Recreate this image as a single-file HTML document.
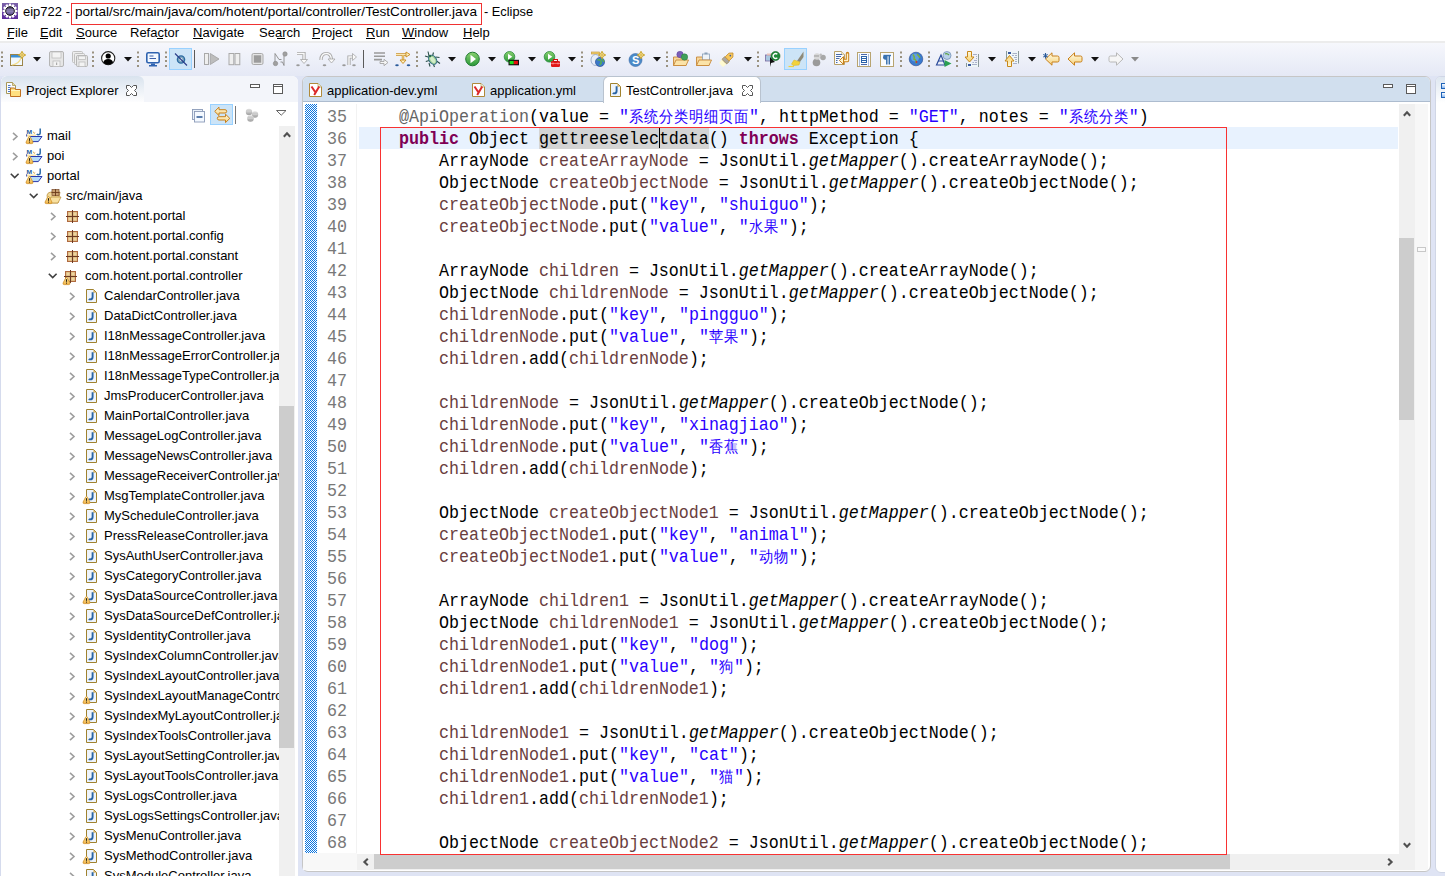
<!DOCTYPE html><html><head><meta charset="utf-8"><style>
*{box-sizing:border-box}
html,body{margin:0;padding:0}
body{width:1445px;height:876px;position:relative;overflow:hidden;background:#fff;font-family:"Liberation Sans",sans-serif;color:#000}
.a{position:absolute}
.t{position:absolute;white-space:pre;font-size:13px;line-height:16px}
svg{position:absolute;overflow:visible}
#code .l{position:absolute;left:0;height:22px;white-space:pre;font-family:"Liberation Mono",monospace;font-size:16.67px;line-height:22px;transform:scaleY(1.12);transform-origin:0 15.4px}
.k{color:#7f0055;font-weight:bold}
.an{color:#646464}
.s{color:#2a00ff}
.v{color:#6a3e3e}
.i{font-style:italic}
.ln{position:absolute;width:30px;text-align:right;font-family:"Liberation Mono",monospace;font-size:16.67px;line-height:22px;color:#787878;transform:scaleY(1.12);transform-origin:0 15.4px}
.cj{display:inline-block;width:15px;font-size:14px;text-align:center;vertical-align:top}
.row .t{color:#000}
</style></head><body>
<div class="a" style="left:0;top:0;width:1445px;height:41px;background:#fff"></div>
<svg style="left:2px;top:3px" width="16" height="16" viewBox="0 0 16 16">
<defs><linearGradient id="eg" x1="0" y1="0" x2="0" y2="1"><stop offset="0" stop-color="#7a62a8"/><stop offset="1" stop-color="#5a2a9c"/></linearGradient>
<linearGradient id="ec" x1="0" y1="0" x2="0" y2="1"><stop offset="0" stop-color="#3a3258"/><stop offset="0.5" stop-color="#8a80b0"/><stop offset="1" stop-color="#4a3a80"/></linearGradient></defs>
<rect x="0" y="0" width="16" height="16" fill="url(#eg)"/>
<g fill="#fff"><rect x="6.9" y="0.6" width="2.2" height="3" transform="rotate(0 8 8)"/><rect x="6.9" y="0.6" width="2.2" height="3" transform="rotate(30 8 8)"/><rect x="6.9" y="0.6" width="2.2" height="3" transform="rotate(60 8 8)"/><rect x="6.9" y="0.6" width="2.2" height="3" transform="rotate(90 8 8)"/><rect x="6.9" y="0.6" width="2.2" height="3" transform="rotate(120 8 8)"/><rect x="6.9" y="0.6" width="2.2" height="3" transform="rotate(150 8 8)"/><rect x="6.9" y="0.6" width="2.2" height="3" transform="rotate(180 8 8)"/><rect x="6.9" y="0.6" width="2.2" height="3" transform="rotate(210 8 8)"/><rect x="6.9" y="0.6" width="2.2" height="3" transform="rotate(240 8 8)"/><rect x="6.9" y="0.6" width="2.2" height="3" transform="rotate(270 8 8)"/><rect x="6.9" y="0.6" width="2.2" height="3" transform="rotate(300 8 8)"/><rect x="6.9" y="0.6" width="2.2" height="3" transform="rotate(330 8 8)"/><circle cx="8" cy="8" r="5.8"/></g>
<circle cx="8" cy="8" r="4.3" fill="url(#ec)" stroke="#111" stroke-width="1"/>
<path d="M4.5 6.5h7M4 8.3h8M4.5 10h7" stroke="#a89ac8" stroke-width="0.5" opacity="0.7"/>
</svg>
<div class="t" style="left:23px;top:4px;font-size:13px">eip722 -</div>
<div class="a" style="left:71px;top:3px;width:411px;height:22px;border:1px solid #f03232"></div>
<div class="t" style="left:75px;top:4px;font-size:13.6px">portal/src/main/java/com/hotent/portal/controller/TestController.java</div>
<div class="t" style="left:484px;top:4px;font-size:12.8px">- Eclipse</div>
<div class="t" style="left:7px;top:25px;font-size:13px">File</div>
<div class="t" style="left:40px;top:25px;font-size:13px">Edit</div>
<div class="t" style="left:76px;top:25px;font-size:13px">Source</div>
<div class="t" style="left:130px;top:25px;font-size:13px">Refactor</div>
<div class="t" style="left:193px;top:25px;font-size:13px">Navigate</div>
<div class="t" style="left:259px;top:25px;font-size:13px">Search</div>
<div class="t" style="left:312px;top:25px;font-size:13px">Project</div>
<div class="t" style="left:366px;top:25px;font-size:13px">Run</div>
<div class="t" style="left:402px;top:25px;font-size:13px">Window</div>
<div class="t" style="left:463px;top:25px;font-size:13px">Help</div>
<div class="a" style="left:7px;top:38px;width:7px;height:1px;background:#000"></div>
<div class="a" style="left:40px;top:38px;width:8px;height:1px;background:#000"></div>
<div class="a" style="left:76px;top:38px;width:9px;height:1px;background:#000"></div>
<div class="a" style="left:157px;top:38px;width:6px;height:1px;background:#000"></div>
<div class="a" style="left:193px;top:38px;width:10px;height:1px;background:#000"></div>
<div class="a" style="left:277px;top:38px;width:8px;height:1px;background:#000"></div>
<div class="a" style="left:312px;top:38px;width:8px;height:1px;background:#000"></div>
<div class="a" style="left:366px;top:38px;width:9px;height:1px;background:#000"></div>
<div class="a" style="left:402px;top:38px;width:13px;height:1px;background:#000"></div>
<div class="a" style="left:463px;top:38px;width:9px;height:1px;background:#000"></div>
<div class="a" style="left:0;top:41px;width:1445px;height:2px;background:#ececec"></div>
<div class="a" style="left:0;top:43px;width:1445px;height:34px;background:linear-gradient(#f6f7fc,#e4e8f5)"></div>
<svg style="left:1px;top:51px" width="3" height="17"><rect x="0" y="0.5" width="2" height="2" fill="#9a9280"/><rect x="0" y="5" width="2" height="2" fill="#9a9280"/><rect x="0" y="9" width="2" height="2" fill="#9a9280"/><rect x="0" y="14" width="2" height="2" fill="#9a9280"/></svg>
<svg style="left:10px;top:51px" width="16" height="16" viewBox="0 0 16 16"><rect x="0.5" y="3.5" width="12" height="11" fill="#f2f8fd" stroke="#9b8448"/><rect x="1" y="4" width="11" height="2.5" fill="#3d8fd4"/><path d="M2 14 Q9 13 11 7" stroke="#f3dc8a" fill="none" stroke-width="1.2"/><path d="M12 0.3 L13.3 2.7 L15.7 4 L13.3 5.3 L12 7.7 L10.7 5.3 L8.3 4 L10.7 2.7Z" fill="#fffbe8" stroke="#c8a020" stroke-width="1" stroke-linejoin="round"/><path d="M12 1.8v4.4M9.8 4h4.4" stroke="#d8b030" stroke-width="1"/></svg>
<svg style="left:33px;top:57px" width="8" height="5"><path d="M0 0H8L4 4.5Z" fill="#111"/></svg>
<svg style="left:49px;top:51px" width="16" height="16" viewBox="0 0 16 16"><rect x="0.5" y="0.5" width="14" height="15" rx="1.5" fill="#e6e6e6" stroke="#b5b5b5"/><rect x="3" y="1" width="9" height="6" fill="#f3f3f3" stroke="#bdbdbd" stroke-width="0.8"/><rect x="4" y="10" width="7" height="5.5" fill="#f3f3f3" stroke="#bdbdbd" stroke-width="0.8"/><rect x="7" y="11.5" width="1.2" height="2.5" fill="#aaa"/></svg>
<svg style="left:72px;top:51px" width="16" height="16" viewBox="0 0 16 16"><rect x="0.5" y="0.5" width="10" height="11" rx="1" fill="#eee" stroke="#c0c0c0"/><rect x="2.5" y="2.5" width="10" height="11" rx="1" fill="#eee" stroke="#c0c0c0"/><rect x="4.5" y="4.5" width="11" height="11" rx="1.2" fill="#e6e6e6" stroke="#b5b5b5"/><rect x="7" y="11" width="6" height="4.5" fill="#f3f3f3" stroke="#bdbdbd" stroke-width="0.8"/><rect x="6.5" y="5" width="7" height="3.5" fill="#f3f3f3" stroke="#bdbdbd" stroke-width="0.8"/></svg>
<svg style="left:92px;top:51px" width="3" height="17"><rect x="0" y="0.5" width="2" height="2" fill="#9a9280"/><rect x="0" y="5" width="2" height="2" fill="#9a9280"/><rect x="0" y="9" width="2" height="2" fill="#9a9280"/><rect x="0" y="14" width="2" height="2" fill="#9a9280"/></svg>
<svg style="left:101px;top:51px" width="16" height="16" viewBox="0 0 16 16"><circle cx="7.2" cy="7.2" r="6.6" fill="#fff" stroke="#222" stroke-width="1.1"/><circle cx="7.2" cy="5" r="2.6" fill="#000"/><path d="M2.3 11.6 Q3 8 7.2 8 Q11.4 8 12.1 11.6 Q10 13.8 7.2 13.8 Q4.4 13.8 2.3 11.6Z" fill="#000"/></svg>
<svg style="left:124px;top:57px" width="8" height="5"><path d="M0 0H8L4 4.5Z" fill="#111"/></svg>
<svg style="left:137px;top:51px" width="3" height="17"><rect x="0" y="0.5" width="2" height="2" fill="#9a9280"/><rect x="0" y="5" width="2" height="2" fill="#9a9280"/><rect x="0" y="9" width="2" height="2" fill="#9a9280"/><rect x="0" y="14" width="2" height="2" fill="#9a9280"/></svg>
<svg style="left:146px;top:52px" width="16" height="16" viewBox="0 0 16 16"><rect x="0.8" y="0.8" width="12.4" height="10" rx="1.5" fill="#f4f9ff" stroke="#2f63b0" stroke-width="1.6"/><path d="M3.5 4h4M3.5 6.5h6.5" stroke="#3a5ea8" stroke-width="1"/><path d="M5 11.5h4v1.5H5z M3 13h8v1.4H3z" fill="#2f63b0"/></svg>
<svg style="left:165px;top:51px" width="3" height="17"><rect x="0" y="0.5" width="2" height="2" fill="#9a9280"/><rect x="0" y="5" width="2" height="2" fill="#9a9280"/><rect x="0" y="9" width="2" height="2" fill="#9a9280"/><rect x="0" y="14" width="2" height="2" fill="#9a9280"/></svg>
<div class="a" style="left:169px;top:48px;width:23px;height:22px;background:#cce4f7;border:1px solid #99d1ff"></div>
<svg style="left:173px;top:51px" width="16" height="16" viewBox="0 0 16 16"><circle cx="8" cy="8.5" r="3.6" fill="#7fa8c0" stroke="#2a6aa0" stroke-width="1.4"/><circle cx="8" cy="8.5" r="1.4" fill="#e8f2f8"/><path d="M2 2.5 L14 14.5" stroke="#2a3a88" stroke-width="1.1"/></svg>
<div class="a" style="left:194px;top:50px;width:1px;height:18px;background:#5a5a5a"></div>
<svg style="left:204px;top:51px" width="16" height="16" viewBox="0 0 16 16"><rect x="0.5" y="2.5" width="4" height="11" fill="#efefef" stroke="#a9a9a9"/><path d="M6.3 2.5 L15 8 L6.3 13.5Z" fill="#bdbdbd" stroke="#a0a0a0" stroke-width="0.8"/></svg>
<svg style="left:228px;top:51px" width="16" height="16" viewBox="0 0 16 16"><rect x="1" y="2.5" width="4.8" height="11.2" fill="#efefef" stroke="#a9a9a9"/><rect x="7" y="2.5" width="4.8" height="11.2" fill="#efefef" stroke="#a9a9a9"/></svg>
<svg style="left:251px;top:51px" width="16" height="16" viewBox="0 0 16 16"><rect x="1" y="2.5" width="11" height="11" rx="1.5" fill="#e5e5e5" stroke="#a9a9a9"/><rect x="2.8" y="4.3" width="7.4" height="7.4" fill="#9c9c9c"/></svg>
<svg style="left:273px;top:51px" width="16" height="16" viewBox="0 0 16 16"><path d="M2 13V2.5 L6 8.5 H8.5 M7.5 11h2 L11 14.5 V5" stroke="#8a8a8a" stroke-width="0.9" fill="none"/><circle cx="2.5" cy="12.5" r="2.2" fill="#a0a0a0" stroke="#888" stroke-width="0.6"/><circle cx="12" cy="3" r="2.2" fill="#a0a0a0" stroke="#888" stroke-width="0.6"/></svg>
<svg style="left:296px;top:51px" width="16" height="16" viewBox="0 0 16 16"><path d="M1 2.5 H8 V9" stroke="#a6a6a6" stroke-width="3.2" fill="none"/><path d="M1 2.5 H8 V9" stroke="#fafafa" stroke-width="1.4" fill="none"/><path d="M4.5 8.5 L8 12.5 L11.5 8.5Z" fill="#fafafa" stroke="#a6a6a6" stroke-width="0.8"/><ellipse cx="2" cy="14.3" rx="1.8" ry="1" fill="#9a9a9a"/><ellipse cx="12" cy="14.3" rx="1.8" ry="1" fill="#9a9a9a"/></svg>
<svg style="left:319px;top:51px" width="16" height="16" viewBox="0 0 16 16"><path d="M2 9 Q2 2.5 7.5 2.5 Q12 2.5 12.5 8.5" stroke="#a6a6a6" stroke-width="3.2" fill="none"/><path d="M2 9 Q2 2.5 7.5 2.5 Q12 2.5 12.5 8.5" stroke="#fafafa" stroke-width="1.4" fill="none"/><path d="M9 8 L12.5 12 L16 8Z" fill="#fafafa" stroke="#a6a6a6" stroke-width="0.8"/><ellipse cx="5.5" cy="14.3" rx="1.8" ry="1" fill="#9a9a9a"/></svg>
<svg style="left:342px;top:51px" width="16" height="16" viewBox="0 0 16 16"><path d="M7 14 V6 H11" stroke="#a6a6a6" stroke-width="3.2" fill="none"/><path d="M7 14 V6 H11" stroke="#fafafa" stroke-width="1.4" fill="none"/><path d="M10.5 2.5 L14.5 6 L10.5 9.5Z" fill="#fafafa" stroke="#a6a6a6" stroke-width="0.8"/><ellipse cx="2" cy="14.3" rx="1.8" ry="1" fill="#9a9a9a"/><ellipse cx="12" cy="14.3" rx="1.8" ry="1" fill="#9a9a9a"/></svg>
<div class="a" style="left:363px;top:50px;width:1px;height:18px;background:#5a5a5a"></div>
<svg style="left:373px;top:51px" width="16" height="16" viewBox="0 0 16 16"><path d="M1 2h11M1 5.3h11M1 8.6h8" stroke="#9a9a9a" stroke-width="1.6"/><path d="M7 10.5 H11 V8.3 L15 11.5 L11 14.7 V12.5 H7Z" fill="#f5f5f5" stroke="#a5a5a5" stroke-width="0.9"/></svg>
<svg style="left:395px;top:51px" width="16" height="16" viewBox="0 0 16 16"><path d="M1 3.5 H11" stroke="#c88a18" stroke-width="2.4"/><path d="M1 3.5 H11" stroke="#fff2c4" stroke-width="0.9"/><path d="M11 1 L15 3.5 L11 6Z" fill="#fff2c4" stroke="#c88a18" stroke-width="0.9"/><path d="M8 4 V9" stroke="#c88a18" stroke-width="2.4"/><path d="M8 4 V9" stroke="#fff2c4" stroke-width="0.9"/><path d="M5 9 L8 12.5 L11 9Z" fill="#fff2c4" stroke="#c88a18" stroke-width="0.9"/><ellipse cx="2" cy="14.3" rx="1.8" ry="1" fill="#2a5a9a"/><ellipse cx="13.5" cy="14.3" rx="1.8" ry="1" fill="#2a5a9a"/></svg>
<svg style="left:416px;top:51px" width="3" height="17"><rect x="0" y="0.5" width="2" height="2" fill="#9a9280"/><rect x="0" y="5" width="2" height="2" fill="#9a9280"/><rect x="0" y="9" width="2" height="2" fill="#9a9280"/><rect x="0" y="14" width="2" height="2" fill="#9a9280"/></svg>
<svg style="left:425px;top:51px" width="16" height="16" viewBox="0 0 16 16"><path d="M3 0.5 L4 5 M8.5 1.5 L7.5 5 M0 5 L4 6.3 M0.8 10.5 L4.2 9.5 M4 12 L5 15.5 M8.5 13.5 L9.5 16 M10.5 6 L14.5 6.5 M11.5 10 L15 12.5" stroke="#2a4e48" stroke-width="1.1" fill="none"/><g transform="rotate(-35 7.5 8.5)"><ellipse cx="7.5" cy="8.8" rx="3.6" ry="5" fill="#9ccc94" stroke="#2a6a80" stroke-width="1"/><ellipse cx="7.5" cy="9" rx="2" ry="3.4" fill="#d4eec8"/></g><circle cx="5" cy="5" r="1.3" fill="#2a6a50"/></svg>
<svg style="left:448px;top:57px" width="8" height="5"><path d="M0 0H8L4 4.5Z" fill="#111"/></svg>
<svg style="left:465px;top:51px" width="16" height="16" viewBox="0 0 16 16"><defs><linearGradient id="rg" x1="0" y1="0" x2="0" y2="1"><stop offset="0" stop-color="#8ad070"/><stop offset="1" stop-color="#2a9a3a"/></linearGradient></defs><circle cx="7.5" cy="8" r="6.8" fill="url(#rg)" stroke="#1f7a30" stroke-width="1"/><path d="M5.5 3.8 L11 8 L5.5 12.2Z" fill="#fff"/></svg>
<svg style="left:488px;top:57px" width="8" height="5"><path d="M0 0H8L4 4.5Z" fill="#111"/></svg>
<svg style="left:504px;top:51px" width="16" height="16" viewBox="0 0 16 16"><circle cx="5.5" cy="5.8" r="5.3" fill="url(#rg)" stroke="#2a8a3a" stroke-width="0.8"/><path d="M4 2.8 L8.3 5.8 L4 8.8Z" fill="#fff"/><rect x="4.5" y="8.8" width="10.5" height="5.5" fill="#111"/><rect x="5.6" y="9.9" width="4.2" height="3.3" fill="#1ee01e"/><rect x="9.8" y="9.9" width="4.1" height="3.3" fill="#e81010"/></svg>
<svg style="left:528px;top:57px" width="8" height="5"><path d="M0 0H8L4 4.5Z" fill="#111"/></svg>
<svg style="left:544px;top:51px" width="16" height="16" viewBox="0 0 16 16"><circle cx="5.5" cy="5.8" r="5.3" fill="url(#rg)" stroke="#2a8a3a" stroke-width="0.8"/><path d="M4 2.8 L8.3 5.8 L4 8.8Z" fill="#fff"/><rect x="7" y="10" width="9" height="6" rx="1.2" fill="#e01818"/><rect x="9.5" y="8.5" width="4" height="2" fill="none" stroke="#d01010" stroke-width="1"/><path d="M7 12.5h9" stroke="#ff9090" stroke-width="0.7"/><path d="M9 11.5v2M14 11.5v2" stroke="#ffb0b0" stroke-width="0.7"/></svg>
<svg style="left:568px;top:57px" width="8" height="5"><path d="M0 0H8L4 4.5Z" fill="#111"/></svg>
<svg style="left:581px;top:51px" width="3" height="17"><rect x="0" y="0.5" width="2" height="2" fill="#9a9280"/><rect x="0" y="5" width="2" height="2" fill="#9a9280"/><rect x="0" y="9" width="2" height="2" fill="#9a9280"/><rect x="0" y="14" width="2" height="2" fill="#9a9280"/></svg>
<svg style="left:590px;top:51px" width="16" height="16" viewBox="0 0 16 16"><rect x="1.5" y="1" width="8" height="2" fill="#f0d070" stroke="#c09030" stroke-width="0.6"/><ellipse cx="5.5" cy="9" rx="4.5" ry="5.5" fill="#e8eef8" stroke="#8ca0c0" stroke-width="0.8"/><circle cx="10" cy="11" r="4.6" fill="#3a78c8" stroke="#2a4a8a" stroke-width="0.6"/><path d="M7.5 9 Q10 8 11 10 Q12 12 9.5 14 M11.5 7.5 Q13 9 14 11" stroke="#5ab04a" stroke-width="1.4" fill="none"/><path d="M12 0.3 L13.3 2.7 L15.7 4 L13.3 5.3 L12 7.7 L10.7 5.3 L8.3 4 L10.7 2.7Z" fill="#fffbe8" stroke="#c8a020" stroke-width="1" stroke-linejoin="round"/><path d="M12 1.8v4.4M9.8 4h4.4" stroke="#d8b030" stroke-width="1"/></svg>
<svg style="left:613px;top:57px" width="8" height="5"><path d="M0 0H8L4 4.5Z" fill="#111"/></svg>
<svg style="left:629px;top:51px" width="16" height="16" viewBox="0 0 16 16"><circle cx="6.5" cy="9" r="6.5" fill="#4a8ac8" stroke="#3a6aa8" stroke-width="0.6"/><text x="6.6" y="13.2" font-size="11" font-weight="bold" fill="#fff" text-anchor="middle" font-family="Liberation Sans">S</text><path d="M12 0.3 L13.3 2.7 L15.7 4 L13.3 5.3 L12 7.7 L10.7 5.3 L8.3 4 L10.7 2.7Z" fill="#fffbe8" stroke="#c8a020" stroke-width="1" stroke-linejoin="round"/><path d="M12 1.8v4.4M9.8 4h4.4" stroke="#d8b030" stroke-width="1"/></svg>
<svg style="left:653px;top:57px" width="8" height="5"><path d="M0 0H8L4 4.5Z" fill="#111"/></svg>
<svg style="left:666px;top:51px" width="3" height="17"><rect x="0" y="0.5" width="2" height="2" fill="#9a9280"/><rect x="0" y="5" width="2" height="2" fill="#9a9280"/><rect x="0" y="9" width="2" height="2" fill="#9a9280"/><rect x="0" y="14" width="2" height="2" fill="#9a9280"/></svg>
<svg style="left:673px;top:51px" width="16" height="16" viewBox="0 0 16 16"><path d="M0.5 6 H6 L7 7 H13 V14.5 H0.5Z" fill="#f6d79c" stroke="#c7893a" stroke-width="0.9"/><path d="M0.5 14.5 L3 9 H15.5 L13 14.5Z" fill="#fbe3a8" stroke="#c7893a" stroke-width="0.9"/><circle cx="7" cy="3.5" r="3.2" fill="#7b5fb8" stroke="#5a3f98" stroke-width="0.5"/><circle cx="11.5" cy="6" r="3.2" fill="#3fa05a" stroke="#2a7a40" stroke-width="0.5"/></svg>
<svg style="left:696px;top:51px" width="16" height="16" viewBox="0 0 16 16"><path d="M0.5 6 H6 L7 7 H13 V14.5 H0.5Z" fill="#f6d79c" stroke="#c7893a" stroke-width="0.9"/><rect x="6.5" y="3" width="7" height="6" fill="#eef3f8" stroke="#8aa0b8" stroke-width="0.8"/><rect x="8.5" y="1.5" width="3" height="1.8" fill="#8aa0b8"/><path d="M0.5 14.5 L3 9 H15.5 L13 14.5Z" fill="#fbe3a8" stroke="#c7893a" stroke-width="0.9"/></svg>
<svg style="left:719px;top:51px" width="16" height="16" viewBox="0 0 16 16"><g transform="rotate(45 8 8)"><rect x="5" y="11.5" width="6" height="5" rx="1" fill="#fffad0"/><rect x="4.6" y="7.8" width="6.8" height="4" rx="1" fill="#aaa6a0" stroke="#a08850" stroke-width="0.7"/><path d="M5.2 7.8 V2.5 L8 -0.5 L10.8 2.5 V7.8Z" fill="#f6c65a" stroke="#c89030" stroke-width="0.8"/><circle cx="8" cy="3.3" r="0.8" fill="#3a5aa0"/></g></svg>
<svg style="left:744px;top:57px" width="8" height="5"><path d="M0 0H8L4 4.5Z" fill="#111"/></svg>
<svg style="left:757px;top:51px" width="3" height="17"><rect x="0" y="0.5" width="2" height="2" fill="#9a9280"/><rect x="0" y="5" width="2" height="2" fill="#9a9280"/><rect x="0" y="9" width="2" height="2" fill="#9a9280"/><rect x="0" y="14" width="2" height="2" fill="#9a9280"/></svg>
<svg style="left:765px;top:51px" width="16" height="16" viewBox="0 0 16 16"><rect x="0.5" y="4" width="7" height="6" fill="#a8c8e0" stroke="#7a6aa0" stroke-width="0.8"/><rect x="2" y="2.5" width="5" height="2" fill="#e8c0b8"/><path d="M5 6 L10 11 L6 12 L5 16Z" fill="#111"/><circle cx="10.5" cy="5" r="4.5" fill="#1f8a3a" stroke="#106020" stroke-width="0.6"/><path d="M12.3 3.3 A2.4 2.4 0 1 0 12.3 6.7" stroke="#fff" stroke-width="1.3" fill="none"/></svg>
<div class="a" style="left:784px;top:48px;width:23px;height:22px;background:#cce4f7;border:1px solid #99d1ff"></div>
<svg style="left:788px;top:51px" width="16" height="16" viewBox="0 0 16 16"><path d="M9 10 L15.5 0.5 V6 L12 11Z" fill="#8e8a78"/><path d="M6 9 L9 10 L12 11 L11 14 L5 14.5 L3.5 13Z" fill="#f2d23a" stroke="#d8b020" stroke-width="0.5"/><path d="M0.5 15.5 H6" stroke="#f2d23a" stroke-width="1.2"/></svg>
<svg style="left:812px;top:51px" width="16" height="16" viewBox="0 0 16 16"><circle cx="4.5" cy="11.5" r="3.8" fill="#9a9a9a"/><circle cx="5" cy="5.5" r="3.2" fill="#d8d8d8"/><path d="M2 5 h5" stroke="#999" stroke-width="1"/><circle cx="11" cy="6.5" r="2.8" fill="#a8a8a8"/><circle cx="8.8" cy="3.8" r="1.2" fill="#bbb"/></svg>
<svg style="left:834px;top:51px" width="16" height="16" viewBox="0 0 16 16"><path d="M0.5 0.5 H7.5 L10.5 3.5 V13.5 H0.5Z" fill="#f8fbff" stroke="#b8a068" stroke-width="1"/><path d="M7.5 0.5 V3.5 H10.5" fill="#efe6c8" stroke="#c8b078" stroke-width="0.6"/><path d="M2 3.5h6M2 5.5h5M2 7.5h3.5M2 9.5h1.5M2 11.5h1.5" stroke="#4a6aa8" stroke-width="1"/><path d="M13.5 2.5 V9.5 H8.5" stroke="#c8801a" stroke-width="3.4" fill="none" stroke-linejoin="round" stroke-linecap="round"/><path d="M13.5 2.5 V9.5 H8.5" stroke="#fff2c8" stroke-width="1.4" fill="none" stroke-linejoin="round"/><path d="M9.5 5.6 L5.4 9.5 L9.5 13.4Z" fill="#fff2c8" stroke="#c8801a" stroke-width="1" stroke-linejoin="round"/></svg>
<svg style="left:857px;top:51px" width="16" height="16" viewBox="0 0 16 16"><rect x="0.5" y="1.5" width="13" height="14" fill="#fafcff" stroke="#b8a470" stroke-width="1"/><path d="M2.5 3.5v11M11.5 3.5v11" stroke="#5a7ab8" stroke-width="1" stroke-dasharray="1 1"/><path d="M4 3.5h6M4 13.5h6" stroke="#4a68a8" stroke-width="1"/><rect x="4.5" y="5.5" width="5" height="6" fill="#fff" stroke="#2a62a8" stroke-width="1"/><path d="M4.5 7.5h5M4.5 9.5h5" stroke="#2a62a8" stroke-width="1"/></svg>
<svg style="left:880px;top:51px" width="16" height="16" viewBox="0 0 16 16"><rect x="0.5" y="1.5" width="13" height="14" fill="#fafcff" stroke="#b8a470" stroke-width="1"/><path d="M3.5 4.5 H11" stroke="#3a72b0" stroke-width="1.4"/><path d="M6.8 4.5 V13.5 M9.3 4.5 V13.5" stroke="#3a72b0" stroke-width="1.5"/><path d="M6.8 4 Q3 4 3 6.4 Q3 8.8 6.8 8.8Z" fill="#3a72b0"/></svg>
<svg style="left:900px;top:51px" width="3" height="17"><rect x="0" y="0.5" width="2" height="2" fill="#9a9280"/><rect x="0" y="5" width="2" height="2" fill="#9a9280"/><rect x="0" y="9" width="2" height="2" fill="#9a9280"/><rect x="0" y="14" width="2" height="2" fill="#9a9280"/></svg>
<svg style="left:909px;top:51px" width="16" height="16" viewBox="0 0 16 16"><circle cx="7" cy="8" r="6.8" fill="#3a7ad0" stroke="#2a4a8a" stroke-width="0.6"/><circle cx="6" cy="6.5" r="4" fill="#7ab8f0" opacity="0.6"/><path d="M4 3.5 Q6 6 5 8 Q8 9 7 12.5 M8 3 Q10 5 11 7" stroke="#7ab040" stroke-width="1.5" fill="none"/><circle cx="7.5" cy="11" r="0.9" fill="#d03030"/></svg>
<svg style="left:928px;top:51px" width="3" height="17"><rect x="0" y="0.5" width="2" height="2" fill="#9a9280"/><rect x="0" y="5" width="2" height="2" fill="#9a9280"/><rect x="0" y="9" width="2" height="2" fill="#9a9280"/><rect x="0" y="14" width="2" height="2" fill="#9a9280"/></svg>
<svg style="left:936px;top:51px" width="16" height="16" viewBox="0 0 16 16"><path d="M0.5 14 L5 4 L9 14Z" fill="none" stroke="#2a4a9a" stroke-width="1.2"/><path d="M2 10h5" stroke="#2a4a9a" stroke-width="1"/><circle cx="11" cy="4.5" r="4" fill="#b8d0e8" stroke="#6a8ab0" stroke-width="0.7"/><path d="M9 3 Q11 2 13 4" stroke="#5aa040" stroke-width="1.2" fill="none"/><path d="M8.5 9 L15.5 12.5 L8.5 16Z" fill="#2aa050"/></svg>
<svg style="left:956px;top:51px" width="3" height="17"><rect x="0" y="0.5" width="2" height="2" fill="#9a9280"/><rect x="0" y="5" width="2" height="2" fill="#9a9280"/><rect x="0" y="9" width="2" height="2" fill="#9a9280"/><rect x="0" y="14" width="2" height="2" fill="#9a9280"/></svg>
<svg style="left:965px;top:51px" width="16" height="16" viewBox="0 0 16 16"><defs><linearGradient id="ag" x1="0" y1="0" x2="0" y2="1"><stop offset="0" stop-color="#fffbe0"/><stop offset="1" stop-color="#f6cf6a"/></linearGradient><linearGradient id="ag2" x1="0" y1="1" x2="0" y2="0"><stop offset="0" stop-color="#fffbe0"/><stop offset="1" stop-color="#f6cf6a"/></linearGradient></defs><rect x="2" y="11.5" width="11" height="4.5" fill="#eef6f8"/><path d="M13.5 3v13M1.5 12v4" stroke="#8a9a9a" stroke-width="1"/><path d="M8 3.5h4M11 5.5h1M11 7.5h1M9 9.5h3M7.5 11.5h1.5M10 11.5h2M7 13.5h5" stroke="#a8b0c8" stroke-width="1"/><rect x="3" y="13" width="3" height="2" fill="#3a5aa0"/><path d="M2.5 0.5 H6.5 V6 H9 L4.5 11 L0 6 H2.5Z" fill="url(#ag)" stroke="#c8881a" stroke-width="1" stroke-linejoin="round"/></svg>
<svg style="left:988px;top:57px" width="8" height="5"><path d="M0 0H8L4 4.5Z" fill="#111"/></svg>
<svg style="left:1005px;top:51px" width="16" height="16" viewBox="0 0 16 16"><rect x="2" y="0.5" width="11" height="12" fill="#eef6f8"/><path d="M1.5 0v8M13.5 0v12.5" stroke="#8a9a9a" stroke-width="1"/><rect x="3" y="1" width="3" height="2" fill="#3a5aa0"/><path d="M7.5 2.5h4.5M7 4.5h2M10 4.5h2M9 6.5h3M10 8.5h2M10 10.5h2M8 12.5h4" stroke="#a8b0c8" stroke-width="1"/><path d="M2.5 15.5 H6.5 V10 H9 L4.5 4.5 L0 10 H2.5Z" fill="url(#ag2)" stroke="#c8881a" stroke-width="1" stroke-linejoin="round"/></svg>
<svg style="left:1028px;top:57px" width="8" height="5"><path d="M0 0H8L4 4.5Z" fill="#111"/></svg>
<svg style="left:1043px;top:52px" width="17" height="15" viewBox="0 0 17 15"><defs><linearGradient id="bg" x1="0" y1="0" x2="0" y2="1"><stop offset="0" stop-color="#fffbe6"/><stop offset="1" stop-color="#f6d27a"/></linearGradient></defs><path d="M2.5 7 L9 0.8 V4 H14.5 Q16 4 16 5.5 V8.5 Q16 10 14.5 10 H9 V13.2Z" fill="url(#bg)" stroke="#c8801a" stroke-width="1" stroke-linejoin="round"/><path d="M2.5 1v5.5M0.3 2.4 L4.7 5.1M4.7 2.4 L0.3 5.1" stroke="#2a5a9a" stroke-width="1.1"/></svg>
<svg style="left:1067px;top:52px" width="16" height="15" viewBox="0 0 16 15"><path d="M1 7 L7.5 0.8 V4 H13.5 Q15 4 15 5.5 V8.5 Q15 10 13.5 10 H7.5 V13.2Z" fill="url(#bg)" stroke="#c8801a" stroke-width="1" stroke-linejoin="round"/></svg>
<svg style="left:1091px;top:57px" width="8" height="5"><path d="M0 0H8L4 4.5Z" fill="#111"/></svg>
<svg style="left:1108px;top:52px" width="16" height="15" viewBox="0 0 16 15"><path d="M15 7 L8.5 0.8 V4 H2.5 Q1 4 1 5.5 V8.5 Q1 10 2.5 10 H8.5 V13.2Z" fill="#f6f6f6" stroke="#b8b8b8" stroke-width="1" stroke-linejoin="round"/></svg>
<svg style="left:1131px;top:57px" width="8" height="5"><path d="M0 0H8L4 4.5Z" fill="#8a8a8a"/></svg>
<div class="a" style="left:0;top:76px;width:1445px;height:800px;background:#dfe4f4"></div>
<div class="a" style="left:0;top:76px;width:298px;height:810px;background:#fff;border-left:1px solid #d5dbed;border-radius:6px 6px 0 0;overflow:hidden">
<div class="a" style="left:0;top:0;width:297px;height:26px;background:#f3f5fa"></div>
<div class="a" style="left:0;top:0;width:143px;height:26px;background:linear-gradient(#d9e3ee,#fdfdfe);border-radius:6px 6px 0 0"></div>
</div>
<svg style="left:5px;top:81px" width="17" height="17" viewBox="0 0 17 17"><path d="M1.5 1.5 H7.5 L10.5 4.5 V12.5 H1.5Z" fill="#fafcff" stroke="#a89858" stroke-width="1"/><path d="M7.5 1.5 V4.5 H10.5" fill="#e8d8a0" stroke="#a89858" stroke-width="0.8"/><path d="M3 4.5h2.5M3 6.5h2.5M3 8.5h2.5M3 10.5h2.5" stroke="#4a78c8" stroke-width="1"/><path d="M5.5 7 H9.5 L10.5 8.5 H15.5 V15.5 H5.5Z" fill="#ffe080" stroke="#c07020" stroke-width="1" stroke-linejoin="round"/><path d="M6 9.5 H15" stroke="#fff6c0" stroke-width="1"/></svg>
<div class="t" style="left:26px;top:83px;font-size:13px">Project Explorer</div>
<svg style="left:126px;top:85px" width="11" height="11" viewBox="0 0 11 11"><path d="M0.5 0.5 H3.5 L5.5 2.5 L7.5 0.5 H10.5 V3.5 L8.5 5.5 L10.5 7.5 V10.5 H7.5 L5.5 8.5 L3.5 10.5 H0.5 V7.5 L2.5 5.5 L0.5 3.5Z" fill="#fff" stroke="#555" stroke-width="1"/></svg>
<div class="a" style="left:250px;top:84px;width:10px;height:4px;border:1px solid #5a5a5a;background:#fff"></div>
<div class="a" style="left:273px;top:84px;width:10px;height:10px;border:1px solid #5a5a5a;background:#fff"><div class="a" style="left:0;top:1px;width:8px;height:1px;background:#5a5a5a"></div></div>
<svg style="left:192px;top:109px" width="16" height="16" viewBox="0 0 16 16"><rect x="0.5" y="0.5" width="10" height="10" fill="#e8f0f8" stroke="#8a9ab8" stroke-width="0.9"/><rect x="2.5" y="2.5" width="10" height="10.5" fill="#f4f9ff" stroke="#8a9ab8" stroke-width="0.9"/><path d="M4.5 8h6" stroke="#1a4a8a" stroke-width="1.4"/></svg>
<div class="a" style="left:210px;top:104px;width:23px;height:21px;background:#cce4f7;border:1px solid #99d1ff"></div>
<svg style="left:214px;top:106px" width="16" height="16" viewBox="0 0 16 16"><path d="M0.7 5.4 L5 1.2 V3.7 H11 Q12.7 3.7 12.7 5.35 Q12.7 7 11 7 H5 V9.6Z" fill="url(#bg)" stroke="#c8801a" stroke-width="1" stroke-linejoin="round"/><path d="M15.8 12.4 L11.5 8.2 V10.7 H5 Q3.3 10.7 3.3 12.35 Q3.3 14 5 14 H11.5 V16.6Z" fill="url(#bg)" stroke="#c8801a" stroke-width="1" stroke-linejoin="round"/></svg>
<div class="a" style="left:235px;top:106px;width:1px;height:18px;background:#777"></div>
<svg style="left:246px;top:108px" width="16" height="16" viewBox="0 0 16 16"><defs><linearGradient id="gb" x1="0" y1="0" x2="0" y2="1"><stop offset="0" stop-color="#e0e0e0"/><stop offset="1" stop-color="#a0a0a0"/></linearGradient></defs><circle cx="3" cy="4" r="3.2" fill="url(#gb)"/><circle cx="9" cy="6.5" r="3.2" fill="url(#gb)"/><circle cx="4.5" cy="10.5" r="3.3" fill="url(#gb)"/><path d="M1 10.3h7M6.5 6.3h5M0.5 3.8h5" stroke="#d8d8d8" stroke-width="0.7"/></svg>
<svg style="left:276px;top:110px" width="11" height="6"><path d="M0.5 0.5 H10 L5.25 5.2Z" fill="#fff" stroke="#555" stroke-width="0.9"/></svg>
<div class="a" style="left:279px;top:126px;width:16px;height:750px;background:#f0f0f0"></div>
<div class="a" style="left:279px;top:406px;width:15px;height:342px;background:#cdcdcd"></div>
<svg style="left:283px;top:131px" width="8" height="7"><path d="M0.8 5.8 L4 2.4 L7.2 5.8" stroke="#505050" stroke-width="2.1" fill="none"/></svg>
<div class="a" style="left:1px;top:126px;width:278px;height:750px;overflow:hidden">
<svg style="left:11px;top:6px" width="7" height="9"><path d="M1 0.8 L5 4.5 L1 8.2" stroke="#9e9e9e" stroke-width="1.6" fill="none"/></svg>
<svg style="left:25px;top:3px" width="16" height="16" viewBox="0 0 16 16"><text x="0.6" y="4.8" font-size="6.2" font-weight="bold" fill="#1a5a9a" font-family="Liberation Sans" textLength="5.6" lengthAdjust="spacingAndGlyphs">M</text><path d="M7.2 2.6 L8.2 4.4 L9.2 3.6" stroke="#d8a040" stroke-width="0.9" fill="none"/><path d="M14.2 -0.6 V3.8 Q14.2 5.8 12.3 5.8 Q11.3 5.8 10.8 5" stroke="#2a6aa8" stroke-width="1.5" fill="none"/><path d="M0.5 5.5 H10 V7.5 H15 L12 13 H4Z" fill="#fbe8b0"/><path d="M0.6 5.3 V7.5" stroke="#2a3aa0" stroke-width="0.9"/><path d="M4.5 7.5 H16 L12.3 12.6 H2.5Z" fill="#b6dcf8" stroke="#2a3ab0" stroke-width="1"/><defs><linearGradient id="wg" x1="0" y1="0" x2="0" y2="1"><stop offset="0" stop-color="#fff0b0"/><stop offset="1" stop-color="#f0b040"/></linearGradient></defs><path d="M3.5 7.4 Q3.9 7.4 4.3 8 L6.9 13 Q7.3 14.6 5.8 14.6 H1.2 Q-0.3 14.6 0.1 13 L2.7 8 Q3.1 7.4 3.5 7.4Z" fill="url(#wg)" stroke="#d0902a" stroke-width="0.8"/><path d="M3.5 9.2v2.6" stroke="#2a2010" stroke-width="1.1"/><rect x="3" y="12.6" width="1" height="1" fill="#2a2010"/></svg>
<div class="t" style="left:46px;top:2px;font-size:13px">mail</div>
<svg style="left:11px;top:26px" width="7" height="9"><path d="M1 0.8 L5 4.5 L1 8.2" stroke="#9e9e9e" stroke-width="1.6" fill="none"/></svg>
<svg style="left:25px;top:23px" width="16" height="16" viewBox="0 0 16 16"><text x="0.6" y="4.8" font-size="6.2" font-weight="bold" fill="#1a5a9a" font-family="Liberation Sans" textLength="5.6" lengthAdjust="spacingAndGlyphs">M</text><path d="M7.2 2.6 L8.2 4.4 L9.2 3.6" stroke="#d8a040" stroke-width="0.9" fill="none"/><path d="M14.2 -0.6 V3.8 Q14.2 5.8 12.3 5.8 Q11.3 5.8 10.8 5" stroke="#2a6aa8" stroke-width="1.5" fill="none"/><path d="M0.5 5.5 H10 V7.5 H15 L12 13 H4Z" fill="#fbe8b0"/><path d="M0.6 5.3 V7.5" stroke="#2a3aa0" stroke-width="0.9"/><path d="M4.5 7.5 H16 L12.3 12.6 H2.5Z" fill="#b6dcf8" stroke="#2a3ab0" stroke-width="1"/><defs><linearGradient id="wg" x1="0" y1="0" x2="0" y2="1"><stop offset="0" stop-color="#fff0b0"/><stop offset="1" stop-color="#f0b040"/></linearGradient></defs><path d="M3.5 7.4 Q3.9 7.4 4.3 8 L6.9 13 Q7.3 14.6 5.8 14.6 H1.2 Q-0.3 14.6 0.1 13 L2.7 8 Q3.1 7.4 3.5 7.4Z" fill="url(#wg)" stroke="#d0902a" stroke-width="0.8"/><path d="M3.5 9.2v2.6" stroke="#2a2010" stroke-width="1.1"/><rect x="3" y="12.6" width="1" height="1" fill="#2a2010"/></svg>
<div class="t" style="left:46px;top:22px;font-size:13px">poi</div>
<svg style="left:9px;top:47px" width="10" height="6"><path d="M0.8 0.8 L4.7 4.6 L8.6 0.8" stroke="#404040" stroke-width="1.6" fill="none"/></svg>
<svg style="left:25px;top:43px" width="16" height="16" viewBox="0 0 16 16"><text x="0.6" y="4.8" font-size="6.2" font-weight="bold" fill="#1a5a9a" font-family="Liberation Sans" textLength="5.6" lengthAdjust="spacingAndGlyphs">M</text><path d="M7.2 2.6 L8.2 4.4 L9.2 3.6" stroke="#d8a040" stroke-width="0.9" fill="none"/><path d="M14.2 -0.6 V3.8 Q14.2 5.8 12.3 5.8 Q11.3 5.8 10.8 5" stroke="#2a6aa8" stroke-width="1.5" fill="none"/><path d="M0.5 5.5 H10 V7.5 H15 L12 13 H4Z" fill="#fbe8b0"/><path d="M0.6 5.3 V7.5" stroke="#2a3aa0" stroke-width="0.9"/><path d="M4.5 7.5 H16 L12.3 12.6 H2.5Z" fill="#b6dcf8" stroke="#2a3ab0" stroke-width="1"/><defs><linearGradient id="wg" x1="0" y1="0" x2="0" y2="1"><stop offset="0" stop-color="#fff0b0"/><stop offset="1" stop-color="#f0b040"/></linearGradient></defs><path d="M3.5 7.4 Q3.9 7.4 4.3 8 L6.9 13 Q7.3 14.6 5.8 14.6 H1.2 Q-0.3 14.6 0.1 13 L2.7 8 Q3.1 7.4 3.5 7.4Z" fill="url(#wg)" stroke="#d0902a" stroke-width="0.8"/><path d="M3.5 9.2v2.6" stroke="#2a2010" stroke-width="1.1"/><rect x="3" y="12.6" width="1" height="1" fill="#2a2010"/></svg>
<div class="t" style="left:46px;top:42px;font-size:13px">portal</div>
<svg style="left:28px;top:67px" width="10" height="6"><path d="M0.8 0.8 L4.7 4.6 L8.6 0.8" stroke="#404040" stroke-width="1.6" fill="none"/></svg>
<svg style="left:44px;top:63px" width="16" height="16" viewBox="0 0 16 16"><path d="M2 6 Q3 3 6 3 H15 L13 14 H3Z" fill="#f0d89a" stroke="#b88a30" stroke-width="0.7"/><rect x="7" y="0.5" width="7" height="6" fill="#c8a070" stroke="#7a4a2a" stroke-width="0.7"/><path d="M10.5 0v7M6.5 3.5h8" stroke="#6a3a1a" stroke-width="0.9"/><path d="M3 14 L6 8 H16 L13 14Z" fill="#f8e0a0" stroke="#b88a30" stroke-width="0.7"/><defs><linearGradient id="wg" x1="0" y1="0" x2="0" y2="1"><stop offset="0" stop-color="#fff0b0"/><stop offset="1" stop-color="#f0b040"/></linearGradient></defs><path d="M3.5 7.4 Q3.9 7.4 4.3 8 L6.9 13 Q7.3 14.6 5.8 14.6 H1.2 Q-0.3 14.6 0.1 13 L2.7 8 Q3.1 7.4 3.5 7.4Z" fill="url(#wg)" stroke="#d0902a" stroke-width="0.8"/><path d="M3.5 9.2v2.6" stroke="#2a2010" stroke-width="1.1"/><rect x="3" y="12.6" width="1" height="1" fill="#2a2010"/></svg>
<div class="t" style="left:65px;top:62px;font-size:13px">src/main/java</div>
<svg style="left:49px;top:86px" width="7" height="9"><path d="M1 0.8 L5 4.5 L1 8.2" stroke="#9e9e9e" stroke-width="1.6" fill="none"/></svg>
<svg style="left:64px;top:84px" width="14" height="16" viewBox="0 0 14 16"><defs><radialGradient id="pg"><stop offset="0" stop-color="#f6e4b0"/><stop offset="1" stop-color="#dcb880"/></radialGradient></defs><rect x="2.5" y="1.5" width="10" height="10" fill="#f0dca8" stroke="#b06a40" stroke-width="1"/><rect x="3" y="2" width="4" height="4" fill="url(#pg)"/><rect x="8" y="2" width="4" height="4" fill="url(#pg)"/><rect x="3" y="7" width="4" height="4" fill="url(#pg)"/><rect x="8" y="7" width="4" height="4" fill="url(#pg)"/><path d="M7.5 0v13M1 6.5h13" stroke="#6a3a22" stroke-width="1"/></svg>
<div class="t" style="left:84px;top:82px;font-size:13px">com.hotent.portal</div>
<svg style="left:49px;top:106px" width="7" height="9"><path d="M1 0.8 L5 4.5 L1 8.2" stroke="#9e9e9e" stroke-width="1.6" fill="none"/></svg>
<svg style="left:64px;top:104px" width="14" height="16" viewBox="0 0 14 16"><defs><radialGradient id="pg"><stop offset="0" stop-color="#f6e4b0"/><stop offset="1" stop-color="#dcb880"/></radialGradient></defs><rect x="2.5" y="1.5" width="10" height="10" fill="#f0dca8" stroke="#b06a40" stroke-width="1"/><rect x="3" y="2" width="4" height="4" fill="url(#pg)"/><rect x="8" y="2" width="4" height="4" fill="url(#pg)"/><rect x="3" y="7" width="4" height="4" fill="url(#pg)"/><rect x="8" y="7" width="4" height="4" fill="url(#pg)"/><path d="M7.5 0v13M1 6.5h13" stroke="#6a3a22" stroke-width="1"/></svg>
<div class="t" style="left:84px;top:102px;font-size:13px">com.hotent.portal.config</div>
<svg style="left:49px;top:126px" width="7" height="9"><path d="M1 0.8 L5 4.5 L1 8.2" stroke="#9e9e9e" stroke-width="1.6" fill="none"/></svg>
<svg style="left:64px;top:124px" width="14" height="16" viewBox="0 0 14 16"><defs><radialGradient id="pg"><stop offset="0" stop-color="#f6e4b0"/><stop offset="1" stop-color="#dcb880"/></radialGradient></defs><rect x="2.5" y="1.5" width="10" height="10" fill="#f0dca8" stroke="#b06a40" stroke-width="1"/><rect x="3" y="2" width="4" height="4" fill="url(#pg)"/><rect x="8" y="2" width="4" height="4" fill="url(#pg)"/><rect x="3" y="7" width="4" height="4" fill="url(#pg)"/><rect x="8" y="7" width="4" height="4" fill="url(#pg)"/><path d="M7.5 0v13M1 6.5h13" stroke="#6a3a22" stroke-width="1"/></svg>
<div class="t" style="left:84px;top:122px;font-size:13px">com.hotent.portal.constant</div>
<svg style="left:47px;top:147px" width="10" height="6"><path d="M0.8 0.8 L4.7 4.6 L8.6 0.8" stroke="#404040" stroke-width="1.6" fill="none"/></svg>
<svg style="left:62px;top:144px" width="16" height="16" viewBox="0 0 16 16"><defs><radialGradient id="pg"><stop offset="0" stop-color="#f6e4b0"/><stop offset="1" stop-color="#dcb880"/></radialGradient></defs><rect x="2.5" y="1.5" width="10" height="10" fill="#f0dca8" stroke="#b06a40" stroke-width="1"/><rect x="3" y="2" width="4" height="4" fill="url(#pg)"/><rect x="8" y="2" width="4" height="4" fill="url(#pg)"/><rect x="3" y="7" width="4" height="4" fill="url(#pg)"/><rect x="8" y="7" width="4" height="4" fill="url(#pg)"/><path d="M7.5 0v13M1 6.5h13" stroke="#6a3a22" stroke-width="1"/><defs><linearGradient id="wg" x1="0" y1="0" x2="0" y2="1"><stop offset="0" stop-color="#fff0b0"/><stop offset="1" stop-color="#f0b040"/></linearGradient></defs><path d="M3.5 7.4 Q3.9 7.4 4.3 8 L6.9 13 Q7.3 14.6 5.8 14.6 H1.2 Q-0.3 14.6 0.1 13 L2.7 8 Q3.1 7.4 3.5 7.4Z" fill="url(#wg)" stroke="#d0902a" stroke-width="0.8"/><path d="M3.5 9.2v2.6" stroke="#2a2010" stroke-width="1.1"/><rect x="3" y="12.6" width="1" height="1" fill="#2a2010"/></svg>
<div class="t" style="left:84px;top:142px;font-size:13px">com.hotent.portal.controller</div>
<svg style="left:68px;top:166px" width="7" height="9"><path d="M1 0.8 L5 4.5 L1 8.2" stroke="#9e9e9e" stroke-width="1.6" fill="none"/></svg>
<svg style="left:85px;top:163px" width="13" height="16" viewBox="0 0 13 16"><path d="M0.5 0.5 H7.5 L10.5 3.5 V13.5 H0.5Z" fill="#eef4fb" stroke="#a0822e" stroke-width="1"/><path d="M7.3 0.8 V3.7 H10.2Z" fill="#dcb460"/><path d="M6.6 3.2 V8 Q6.6 10.4 4.2 10.4 Q3.4 10.4 2.8 9.9" stroke="#2a64a4" stroke-width="1.9" fill="none"/></svg>
<div class="t" style="left:103px;top:162px;font-size:13px">CalendarController.java</div>
<svg style="left:68px;top:186px" width="7" height="9"><path d="M1 0.8 L5 4.5 L1 8.2" stroke="#9e9e9e" stroke-width="1.6" fill="none"/></svg>
<svg style="left:85px;top:183px" width="13" height="16" viewBox="0 0 13 16"><path d="M0.5 0.5 H7.5 L10.5 3.5 V13.5 H0.5Z" fill="#eef4fb" stroke="#a0822e" stroke-width="1"/><path d="M7.3 0.8 V3.7 H10.2Z" fill="#dcb460"/><path d="M6.6 3.2 V8 Q6.6 10.4 4.2 10.4 Q3.4 10.4 2.8 9.9" stroke="#2a64a4" stroke-width="1.9" fill="none"/></svg>
<div class="t" style="left:103px;top:182px;font-size:13px">DataDictController.java</div>
<svg style="left:68px;top:206px" width="7" height="9"><path d="M1 0.8 L5 4.5 L1 8.2" stroke="#9e9e9e" stroke-width="1.6" fill="none"/></svg>
<svg style="left:85px;top:203px" width="13" height="16" viewBox="0 0 13 16"><path d="M0.5 0.5 H7.5 L10.5 3.5 V13.5 H0.5Z" fill="#eef4fb" stroke="#a0822e" stroke-width="1"/><path d="M7.3 0.8 V3.7 H10.2Z" fill="#dcb460"/><path d="M6.6 3.2 V8 Q6.6 10.4 4.2 10.4 Q3.4 10.4 2.8 9.9" stroke="#2a64a4" stroke-width="1.9" fill="none"/></svg>
<div class="t" style="left:103px;top:202px;font-size:13px">I18nMessageController.java</div>
<svg style="left:68px;top:226px" width="7" height="9"><path d="M1 0.8 L5 4.5 L1 8.2" stroke="#9e9e9e" stroke-width="1.6" fill="none"/></svg>
<svg style="left:85px;top:223px" width="13" height="16" viewBox="0 0 13 16"><path d="M0.5 0.5 H7.5 L10.5 3.5 V13.5 H0.5Z" fill="#eef4fb" stroke="#a0822e" stroke-width="1"/><path d="M7.3 0.8 V3.7 H10.2Z" fill="#dcb460"/><path d="M6.6 3.2 V8 Q6.6 10.4 4.2 10.4 Q3.4 10.4 2.8 9.9" stroke="#2a64a4" stroke-width="1.9" fill="none"/></svg>
<div class="t" style="left:103px;top:222px;font-size:13px">I18nMessageErrorController.java</div>
<svg style="left:68px;top:246px" width="7" height="9"><path d="M1 0.8 L5 4.5 L1 8.2" stroke="#9e9e9e" stroke-width="1.6" fill="none"/></svg>
<svg style="left:85px;top:243px" width="13" height="16" viewBox="0 0 13 16"><path d="M0.5 0.5 H7.5 L10.5 3.5 V13.5 H0.5Z" fill="#eef4fb" stroke="#a0822e" stroke-width="1"/><path d="M7.3 0.8 V3.7 H10.2Z" fill="#dcb460"/><path d="M6.6 3.2 V8 Q6.6 10.4 4.2 10.4 Q3.4 10.4 2.8 9.9" stroke="#2a64a4" stroke-width="1.9" fill="none"/></svg>
<div class="t" style="left:103px;top:242px;font-size:13px">I18nMessageTypeController.java</div>
<svg style="left:68px;top:266px" width="7" height="9"><path d="M1 0.8 L5 4.5 L1 8.2" stroke="#9e9e9e" stroke-width="1.6" fill="none"/></svg>
<svg style="left:85px;top:263px" width="13" height="16" viewBox="0 0 13 16"><path d="M0.5 0.5 H7.5 L10.5 3.5 V13.5 H0.5Z" fill="#eef4fb" stroke="#a0822e" stroke-width="1"/><path d="M7.3 0.8 V3.7 H10.2Z" fill="#dcb460"/><path d="M6.6 3.2 V8 Q6.6 10.4 4.2 10.4 Q3.4 10.4 2.8 9.9" stroke="#2a64a4" stroke-width="1.9" fill="none"/></svg>
<div class="t" style="left:103px;top:262px;font-size:13px">JmsProducerController.java</div>
<svg style="left:68px;top:286px" width="7" height="9"><path d="M1 0.8 L5 4.5 L1 8.2" stroke="#9e9e9e" stroke-width="1.6" fill="none"/></svg>
<svg style="left:85px;top:283px" width="13" height="16" viewBox="0 0 13 16"><path d="M0.5 0.5 H7.5 L10.5 3.5 V13.5 H0.5Z" fill="#eef4fb" stroke="#a0822e" stroke-width="1"/><path d="M7.3 0.8 V3.7 H10.2Z" fill="#dcb460"/><path d="M6.6 3.2 V8 Q6.6 10.4 4.2 10.4 Q3.4 10.4 2.8 9.9" stroke="#2a64a4" stroke-width="1.9" fill="none"/></svg>
<div class="t" style="left:103px;top:282px;font-size:13px">MainPortalController.java</div>
<svg style="left:68px;top:306px" width="7" height="9"><path d="M1 0.8 L5 4.5 L1 8.2" stroke="#9e9e9e" stroke-width="1.6" fill="none"/></svg>
<svg style="left:85px;top:303px" width="13" height="16" viewBox="0 0 13 16"><path d="M0.5 0.5 H7.5 L10.5 3.5 V13.5 H0.5Z" fill="#eef4fb" stroke="#a0822e" stroke-width="1"/><path d="M7.3 0.8 V3.7 H10.2Z" fill="#dcb460"/><path d="M6.6 3.2 V8 Q6.6 10.4 4.2 10.4 Q3.4 10.4 2.8 9.9" stroke="#2a64a4" stroke-width="1.9" fill="none"/></svg>
<div class="t" style="left:103px;top:302px;font-size:13px">MessageLogController.java</div>
<svg style="left:68px;top:326px" width="7" height="9"><path d="M1 0.8 L5 4.5 L1 8.2" stroke="#9e9e9e" stroke-width="1.6" fill="none"/></svg>
<svg style="left:85px;top:323px" width="13" height="16" viewBox="0 0 13 16"><path d="M0.5 0.5 H7.5 L10.5 3.5 V13.5 H0.5Z" fill="#eef4fb" stroke="#a0822e" stroke-width="1"/><path d="M7.3 0.8 V3.7 H10.2Z" fill="#dcb460"/><path d="M6.6 3.2 V8 Q6.6 10.4 4.2 10.4 Q3.4 10.4 2.8 9.9" stroke="#2a64a4" stroke-width="1.9" fill="none"/></svg>
<div class="t" style="left:103px;top:322px;font-size:13px">MessageNewsController.java</div>
<svg style="left:68px;top:346px" width="7" height="9"><path d="M1 0.8 L5 4.5 L1 8.2" stroke="#9e9e9e" stroke-width="1.6" fill="none"/></svg>
<svg style="left:85px;top:343px" width="13" height="16" viewBox="0 0 13 16"><path d="M0.5 0.5 H7.5 L10.5 3.5 V13.5 H0.5Z" fill="#eef4fb" stroke="#a0822e" stroke-width="1"/><path d="M7.3 0.8 V3.7 H10.2Z" fill="#dcb460"/><path d="M6.6 3.2 V8 Q6.6 10.4 4.2 10.4 Q3.4 10.4 2.8 9.9" stroke="#2a64a4" stroke-width="1.9" fill="none"/></svg>
<div class="t" style="left:103px;top:342px;font-size:13px">MessageReceiverController.java</div>
<svg style="left:68px;top:366px" width="7" height="9"><path d="M1 0.8 L5 4.5 L1 8.2" stroke="#9e9e9e" stroke-width="1.6" fill="none"/></svg>
<svg style="left:83px;top:363px" width="15" height="16" viewBox="0 0 15 16"><g transform="translate(2,0)"><path d="M0.5 0.5 H7.5 L10.5 3.5 V13.5 H0.5Z" fill="#eef4fb" stroke="#a0822e" stroke-width="1"/><path d="M7.3 0.8 V3.7 H10.2Z" fill="#dcb460"/><path d="M6.6 3.2 V8 Q6.6 10.4 4.2 10.4 Q3.4 10.4 2.8 9.9" stroke="#2a64a4" stroke-width="1.9" fill="none"/></g><g transform="translate(-1,0)"><defs><linearGradient id="wg" x1="0" y1="0" x2="0" y2="1"><stop offset="0" stop-color="#fff0b0"/><stop offset="1" stop-color="#f0b040"/></linearGradient></defs><path d="M3.5 7.4 Q3.9 7.4 4.3 8 L6.9 13 Q7.3 14.6 5.8 14.6 H1.2 Q-0.3 14.6 0.1 13 L2.7 8 Q3.1 7.4 3.5 7.4Z" fill="url(#wg)" stroke="#d0902a" stroke-width="0.8"/><path d="M3.5 9.2v2.6" stroke="#2a2010" stroke-width="1.1"/><rect x="3" y="12.6" width="1" height="1" fill="#2a2010"/></g></svg>
<div class="t" style="left:103px;top:362px;font-size:13px">MsgTemplateController.java</div>
<svg style="left:68px;top:386px" width="7" height="9"><path d="M1 0.8 L5 4.5 L1 8.2" stroke="#9e9e9e" stroke-width="1.6" fill="none"/></svg>
<svg style="left:85px;top:383px" width="13" height="16" viewBox="0 0 13 16"><path d="M0.5 0.5 H7.5 L10.5 3.5 V13.5 H0.5Z" fill="#eef4fb" stroke="#a0822e" stroke-width="1"/><path d="M7.3 0.8 V3.7 H10.2Z" fill="#dcb460"/><path d="M6.6 3.2 V8 Q6.6 10.4 4.2 10.4 Q3.4 10.4 2.8 9.9" stroke="#2a64a4" stroke-width="1.9" fill="none"/></svg>
<div class="t" style="left:103px;top:382px;font-size:13px">MyScheduleController.java</div>
<svg style="left:68px;top:406px" width="7" height="9"><path d="M1 0.8 L5 4.5 L1 8.2" stroke="#9e9e9e" stroke-width="1.6" fill="none"/></svg>
<svg style="left:85px;top:403px" width="13" height="16" viewBox="0 0 13 16"><path d="M0.5 0.5 H7.5 L10.5 3.5 V13.5 H0.5Z" fill="#eef4fb" stroke="#a0822e" stroke-width="1"/><path d="M7.3 0.8 V3.7 H10.2Z" fill="#dcb460"/><path d="M6.6 3.2 V8 Q6.6 10.4 4.2 10.4 Q3.4 10.4 2.8 9.9" stroke="#2a64a4" stroke-width="1.9" fill="none"/></svg>
<div class="t" style="left:103px;top:402px;font-size:13px">PressReleaseController.java</div>
<svg style="left:68px;top:426px" width="7" height="9"><path d="M1 0.8 L5 4.5 L1 8.2" stroke="#9e9e9e" stroke-width="1.6" fill="none"/></svg>
<svg style="left:85px;top:423px" width="13" height="16" viewBox="0 0 13 16"><path d="M0.5 0.5 H7.5 L10.5 3.5 V13.5 H0.5Z" fill="#eef4fb" stroke="#a0822e" stroke-width="1"/><path d="M7.3 0.8 V3.7 H10.2Z" fill="#dcb460"/><path d="M6.6 3.2 V8 Q6.6 10.4 4.2 10.4 Q3.4 10.4 2.8 9.9" stroke="#2a64a4" stroke-width="1.9" fill="none"/></svg>
<div class="t" style="left:103px;top:422px;font-size:13px">SysAuthUserController.java</div>
<svg style="left:68px;top:446px" width="7" height="9"><path d="M1 0.8 L5 4.5 L1 8.2" stroke="#9e9e9e" stroke-width="1.6" fill="none"/></svg>
<svg style="left:85px;top:443px" width="13" height="16" viewBox="0 0 13 16"><path d="M0.5 0.5 H7.5 L10.5 3.5 V13.5 H0.5Z" fill="#eef4fb" stroke="#a0822e" stroke-width="1"/><path d="M7.3 0.8 V3.7 H10.2Z" fill="#dcb460"/><path d="M6.6 3.2 V8 Q6.6 10.4 4.2 10.4 Q3.4 10.4 2.8 9.9" stroke="#2a64a4" stroke-width="1.9" fill="none"/></svg>
<div class="t" style="left:103px;top:442px;font-size:13px">SysCategoryController.java</div>
<svg style="left:68px;top:466px" width="7" height="9"><path d="M1 0.8 L5 4.5 L1 8.2" stroke="#9e9e9e" stroke-width="1.6" fill="none"/></svg>
<svg style="left:83px;top:463px" width="15" height="16" viewBox="0 0 15 16"><g transform="translate(2,0)"><path d="M0.5 0.5 H7.5 L10.5 3.5 V13.5 H0.5Z" fill="#eef4fb" stroke="#a0822e" stroke-width="1"/><path d="M7.3 0.8 V3.7 H10.2Z" fill="#dcb460"/><path d="M6.6 3.2 V8 Q6.6 10.4 4.2 10.4 Q3.4 10.4 2.8 9.9" stroke="#2a64a4" stroke-width="1.9" fill="none"/></g><g transform="translate(-1,0)"><defs><linearGradient id="wg" x1="0" y1="0" x2="0" y2="1"><stop offset="0" stop-color="#fff0b0"/><stop offset="1" stop-color="#f0b040"/></linearGradient></defs><path d="M3.5 7.4 Q3.9 7.4 4.3 8 L6.9 13 Q7.3 14.6 5.8 14.6 H1.2 Q-0.3 14.6 0.1 13 L2.7 8 Q3.1 7.4 3.5 7.4Z" fill="url(#wg)" stroke="#d0902a" stroke-width="0.8"/><path d="M3.5 9.2v2.6" stroke="#2a2010" stroke-width="1.1"/><rect x="3" y="12.6" width="1" height="1" fill="#2a2010"/></g></svg>
<div class="t" style="left:103px;top:462px;font-size:13px">SysDataSourceController.java</div>
<svg style="left:68px;top:486px" width="7" height="9"><path d="M1 0.8 L5 4.5 L1 8.2" stroke="#9e9e9e" stroke-width="1.6" fill="none"/></svg>
<svg style="left:85px;top:483px" width="13" height="16" viewBox="0 0 13 16"><path d="M0.5 0.5 H7.5 L10.5 3.5 V13.5 H0.5Z" fill="#eef4fb" stroke="#a0822e" stroke-width="1"/><path d="M7.3 0.8 V3.7 H10.2Z" fill="#dcb460"/><path d="M6.6 3.2 V8 Q6.6 10.4 4.2 10.4 Q3.4 10.4 2.8 9.9" stroke="#2a64a4" stroke-width="1.9" fill="none"/></svg>
<div class="t" style="left:103px;top:482px;font-size:13px">SysDataSourceDefController.java</div>
<svg style="left:68px;top:506px" width="7" height="9"><path d="M1 0.8 L5 4.5 L1 8.2" stroke="#9e9e9e" stroke-width="1.6" fill="none"/></svg>
<svg style="left:85px;top:503px" width="13" height="16" viewBox="0 0 13 16"><path d="M0.5 0.5 H7.5 L10.5 3.5 V13.5 H0.5Z" fill="#eef4fb" stroke="#a0822e" stroke-width="1"/><path d="M7.3 0.8 V3.7 H10.2Z" fill="#dcb460"/><path d="M6.6 3.2 V8 Q6.6 10.4 4.2 10.4 Q3.4 10.4 2.8 9.9" stroke="#2a64a4" stroke-width="1.9" fill="none"/></svg>
<div class="t" style="left:103px;top:502px;font-size:13px">SysIdentityController.java</div>
<svg style="left:68px;top:526px" width="7" height="9"><path d="M1 0.8 L5 4.5 L1 8.2" stroke="#9e9e9e" stroke-width="1.6" fill="none"/></svg>
<svg style="left:85px;top:523px" width="13" height="16" viewBox="0 0 13 16"><path d="M0.5 0.5 H7.5 L10.5 3.5 V13.5 H0.5Z" fill="#eef4fb" stroke="#a0822e" stroke-width="1"/><path d="M7.3 0.8 V3.7 H10.2Z" fill="#dcb460"/><path d="M6.6 3.2 V8 Q6.6 10.4 4.2 10.4 Q3.4 10.4 2.8 9.9" stroke="#2a64a4" stroke-width="1.9" fill="none"/></svg>
<div class="t" style="left:103px;top:522px;font-size:13px">SysIndexColumnController.java</div>
<svg style="left:68px;top:546px" width="7" height="9"><path d="M1 0.8 L5 4.5 L1 8.2" stroke="#9e9e9e" stroke-width="1.6" fill="none"/></svg>
<svg style="left:85px;top:543px" width="13" height="16" viewBox="0 0 13 16"><path d="M0.5 0.5 H7.5 L10.5 3.5 V13.5 H0.5Z" fill="#eef4fb" stroke="#a0822e" stroke-width="1"/><path d="M7.3 0.8 V3.7 H10.2Z" fill="#dcb460"/><path d="M6.6 3.2 V8 Q6.6 10.4 4.2 10.4 Q3.4 10.4 2.8 9.9" stroke="#2a64a4" stroke-width="1.9" fill="none"/></svg>
<div class="t" style="left:103px;top:542px;font-size:13px">SysIndexLayoutController.java</div>
<svg style="left:68px;top:566px" width="7" height="9"><path d="M1 0.8 L5 4.5 L1 8.2" stroke="#9e9e9e" stroke-width="1.6" fill="none"/></svg>
<svg style="left:83px;top:563px" width="15" height="16" viewBox="0 0 15 16"><g transform="translate(2,0)"><path d="M0.5 0.5 H7.5 L10.5 3.5 V13.5 H0.5Z" fill="#eef4fb" stroke="#a0822e" stroke-width="1"/><path d="M7.3 0.8 V3.7 H10.2Z" fill="#dcb460"/><path d="M6.6 3.2 V8 Q6.6 10.4 4.2 10.4 Q3.4 10.4 2.8 9.9" stroke="#2a64a4" stroke-width="1.9" fill="none"/></g><g transform="translate(-1,0)"><defs><linearGradient id="wg" x1="0" y1="0" x2="0" y2="1"><stop offset="0" stop-color="#fff0b0"/><stop offset="1" stop-color="#f0b040"/></linearGradient></defs><path d="M3.5 7.4 Q3.9 7.4 4.3 8 L6.9 13 Q7.3 14.6 5.8 14.6 H1.2 Q-0.3 14.6 0.1 13 L2.7 8 Q3.1 7.4 3.5 7.4Z" fill="url(#wg)" stroke="#d0902a" stroke-width="0.8"/><path d="M3.5 9.2v2.6" stroke="#2a2010" stroke-width="1.1"/><rect x="3" y="12.6" width="1" height="1" fill="#2a2010"/></g></svg>
<div class="t" style="left:103px;top:562px;font-size:13px">SysIndexLayoutManageController.java</div>
<svg style="left:68px;top:586px" width="7" height="9"><path d="M1 0.8 L5 4.5 L1 8.2" stroke="#9e9e9e" stroke-width="1.6" fill="none"/></svg>
<svg style="left:83px;top:583px" width="15" height="16" viewBox="0 0 15 16"><g transform="translate(2,0)"><path d="M0.5 0.5 H7.5 L10.5 3.5 V13.5 H0.5Z" fill="#eef4fb" stroke="#a0822e" stroke-width="1"/><path d="M7.3 0.8 V3.7 H10.2Z" fill="#dcb460"/><path d="M6.6 3.2 V8 Q6.6 10.4 4.2 10.4 Q3.4 10.4 2.8 9.9" stroke="#2a64a4" stroke-width="1.9" fill="none"/></g><g transform="translate(-1,0)"><defs><linearGradient id="wg" x1="0" y1="0" x2="0" y2="1"><stop offset="0" stop-color="#fff0b0"/><stop offset="1" stop-color="#f0b040"/></linearGradient></defs><path d="M3.5 7.4 Q3.9 7.4 4.3 8 L6.9 13 Q7.3 14.6 5.8 14.6 H1.2 Q-0.3 14.6 0.1 13 L2.7 8 Q3.1 7.4 3.5 7.4Z" fill="url(#wg)" stroke="#d0902a" stroke-width="0.8"/><path d="M3.5 9.2v2.6" stroke="#2a2010" stroke-width="1.1"/><rect x="3" y="12.6" width="1" height="1" fill="#2a2010"/></g></svg>
<div class="t" style="left:103px;top:582px;font-size:13px">SysIndexMyLayoutController.java</div>
<svg style="left:68px;top:606px" width="7" height="9"><path d="M1 0.8 L5 4.5 L1 8.2" stroke="#9e9e9e" stroke-width="1.6" fill="none"/></svg>
<svg style="left:85px;top:603px" width="13" height="16" viewBox="0 0 13 16"><path d="M0.5 0.5 H7.5 L10.5 3.5 V13.5 H0.5Z" fill="#eef4fb" stroke="#a0822e" stroke-width="1"/><path d="M7.3 0.8 V3.7 H10.2Z" fill="#dcb460"/><path d="M6.6 3.2 V8 Q6.6 10.4 4.2 10.4 Q3.4 10.4 2.8 9.9" stroke="#2a64a4" stroke-width="1.9" fill="none"/></svg>
<div class="t" style="left:103px;top:602px;font-size:13px">SysIndexToolsController.java</div>
<svg style="left:68px;top:626px" width="7" height="9"><path d="M1 0.8 L5 4.5 L1 8.2" stroke="#9e9e9e" stroke-width="1.6" fill="none"/></svg>
<svg style="left:85px;top:623px" width="13" height="16" viewBox="0 0 13 16"><path d="M0.5 0.5 H7.5 L10.5 3.5 V13.5 H0.5Z" fill="#eef4fb" stroke="#a0822e" stroke-width="1"/><path d="M7.3 0.8 V3.7 H10.2Z" fill="#dcb460"/><path d="M6.6 3.2 V8 Q6.6 10.4 4.2 10.4 Q3.4 10.4 2.8 9.9" stroke="#2a64a4" stroke-width="1.9" fill="none"/></svg>
<div class="t" style="left:103px;top:622px;font-size:13px">SysLayoutSettingController.java</div>
<svg style="left:68px;top:646px" width="7" height="9"><path d="M1 0.8 L5 4.5 L1 8.2" stroke="#9e9e9e" stroke-width="1.6" fill="none"/></svg>
<svg style="left:85px;top:643px" width="13" height="16" viewBox="0 0 13 16"><path d="M0.5 0.5 H7.5 L10.5 3.5 V13.5 H0.5Z" fill="#eef4fb" stroke="#a0822e" stroke-width="1"/><path d="M7.3 0.8 V3.7 H10.2Z" fill="#dcb460"/><path d="M6.6 3.2 V8 Q6.6 10.4 4.2 10.4 Q3.4 10.4 2.8 9.9" stroke="#2a64a4" stroke-width="1.9" fill="none"/></svg>
<div class="t" style="left:103px;top:642px;font-size:13px">SysLayoutToolsController.java</div>
<svg style="left:68px;top:666px" width="7" height="9"><path d="M1 0.8 L5 4.5 L1 8.2" stroke="#9e9e9e" stroke-width="1.6" fill="none"/></svg>
<svg style="left:85px;top:663px" width="13" height="16" viewBox="0 0 13 16"><path d="M0.5 0.5 H7.5 L10.5 3.5 V13.5 H0.5Z" fill="#eef4fb" stroke="#a0822e" stroke-width="1"/><path d="M7.3 0.8 V3.7 H10.2Z" fill="#dcb460"/><path d="M6.6 3.2 V8 Q6.6 10.4 4.2 10.4 Q3.4 10.4 2.8 9.9" stroke="#2a64a4" stroke-width="1.9" fill="none"/></svg>
<div class="t" style="left:103px;top:662px;font-size:13px">SysLogsController.java</div>
<svg style="left:68px;top:686px" width="7" height="9"><path d="M1 0.8 L5 4.5 L1 8.2" stroke="#9e9e9e" stroke-width="1.6" fill="none"/></svg>
<svg style="left:85px;top:683px" width="13" height="16" viewBox="0 0 13 16"><path d="M0.5 0.5 H7.5 L10.5 3.5 V13.5 H0.5Z" fill="#eef4fb" stroke="#a0822e" stroke-width="1"/><path d="M7.3 0.8 V3.7 H10.2Z" fill="#dcb460"/><path d="M6.6 3.2 V8 Q6.6 10.4 4.2 10.4 Q3.4 10.4 2.8 9.9" stroke="#2a64a4" stroke-width="1.9" fill="none"/></svg>
<div class="t" style="left:103px;top:682px;font-size:13px">SysLogsSettingsController.java</div>
<svg style="left:68px;top:706px" width="7" height="9"><path d="M1 0.8 L5 4.5 L1 8.2" stroke="#9e9e9e" stroke-width="1.6" fill="none"/></svg>
<svg style="left:83px;top:703px" width="15" height="16" viewBox="0 0 15 16"><g transform="translate(2,0)"><path d="M0.5 0.5 H7.5 L10.5 3.5 V13.5 H0.5Z" fill="#eef4fb" stroke="#a0822e" stroke-width="1"/><path d="M7.3 0.8 V3.7 H10.2Z" fill="#dcb460"/><path d="M6.6 3.2 V8 Q6.6 10.4 4.2 10.4 Q3.4 10.4 2.8 9.9" stroke="#2a64a4" stroke-width="1.9" fill="none"/></g><g transform="translate(-1,0)"><defs><linearGradient id="wg" x1="0" y1="0" x2="0" y2="1"><stop offset="0" stop-color="#fff0b0"/><stop offset="1" stop-color="#f0b040"/></linearGradient></defs><path d="M3.5 7.4 Q3.9 7.4 4.3 8 L6.9 13 Q7.3 14.6 5.8 14.6 H1.2 Q-0.3 14.6 0.1 13 L2.7 8 Q3.1 7.4 3.5 7.4Z" fill="url(#wg)" stroke="#d0902a" stroke-width="0.8"/><path d="M3.5 9.2v2.6" stroke="#2a2010" stroke-width="1.1"/><rect x="3" y="12.6" width="1" height="1" fill="#2a2010"/></g></svg>
<div class="t" style="left:103px;top:702px;font-size:13px">SysMenuController.java</div>
<svg style="left:68px;top:726px" width="7" height="9"><path d="M1 0.8 L5 4.5 L1 8.2" stroke="#9e9e9e" stroke-width="1.6" fill="none"/></svg>
<svg style="left:83px;top:723px" width="15" height="16" viewBox="0 0 15 16"><g transform="translate(2,0)"><path d="M0.5 0.5 H7.5 L10.5 3.5 V13.5 H0.5Z" fill="#eef4fb" stroke="#a0822e" stroke-width="1"/><path d="M7.3 0.8 V3.7 H10.2Z" fill="#dcb460"/><path d="M6.6 3.2 V8 Q6.6 10.4 4.2 10.4 Q3.4 10.4 2.8 9.9" stroke="#2a64a4" stroke-width="1.9" fill="none"/></g><g transform="translate(-1,0)"><defs><linearGradient id="wg" x1="0" y1="0" x2="0" y2="1"><stop offset="0" stop-color="#fff0b0"/><stop offset="1" stop-color="#f0b040"/></linearGradient></defs><path d="M3.5 7.4 Q3.9 7.4 4.3 8 L6.9 13 Q7.3 14.6 5.8 14.6 H1.2 Q-0.3 14.6 0.1 13 L2.7 8 Q3.1 7.4 3.5 7.4Z" fill="url(#wg)" stroke="#d0902a" stroke-width="0.8"/><path d="M3.5 9.2v2.6" stroke="#2a2010" stroke-width="1.1"/><rect x="3" y="12.6" width="1" height="1" fill="#2a2010"/></g></svg>
<div class="t" style="left:103px;top:722px;font-size:13px">SysMethodController.java</div>
<svg style="left:68px;top:746px" width="7" height="9"><path d="M1 0.8 L5 4.5 L1 8.2" stroke="#9e9e9e" stroke-width="1.6" fill="none"/></svg>
<svg style="left:85px;top:743px" width="13" height="16" viewBox="0 0 13 16"><path d="M0.5 0.5 H7.5 L10.5 3.5 V13.5 H0.5Z" fill="#eef4fb" stroke="#a0822e" stroke-width="1"/><path d="M7.3 0.8 V3.7 H10.2Z" fill="#dcb460"/><path d="M6.6 3.2 V8 Q6.6 10.4 4.2 10.4 Q3.4 10.4 2.8 9.9" stroke="#2a64a4" stroke-width="1.9" fill="none"/></svg>
<div class="t" style="left:103px;top:742px;font-size:13px">SysModuleController.java</div>
</div>
<div class="a" style="left:302px;top:76px;width:1129px;height:796px;background:#fff;border:1px solid #c6c6c6;border-radius:6px"></div>
<div class="a" style="left:303px;top:77px;width:1127px;height:25px;background:#d1dfee;border-bottom:1px solid #adbccf;border-radius:5px 5px 0 0"></div>
<svg style="left:309px;top:83px" width="13" height="14" viewBox="0 0 13 14"><path d="M0.5 0.5 H9 L12.5 4 V13.5 H0.5Z" fill="#fff" stroke="#b08a3a" stroke-width="1"/><path d="M9 0.5 V4 H12.5" fill="#e8f4d8" stroke="#b08a3a" stroke-width="0.6"/><path d="M2.5 3.5 L6.2 9 M10.2 3.5 L5.2 12" stroke="#dc2a2a" stroke-width="2" fill="none"/></svg>
<div class="t" style="left:327px;top:83px;font-size:13px">application-dev.yml</div>
<svg style="left:472px;top:83px" width="13" height="14" viewBox="0 0 13 14"><path d="M0.5 0.5 H9 L12.5 4 V13.5 H0.5Z" fill="#fff" stroke="#b08a3a" stroke-width="1"/><path d="M9 0.5 V4 H12.5" fill="#e8f4d8" stroke="#b08a3a" stroke-width="0.6"/><path d="M2.5 3.5 L6.2 9 M10.2 3.5 L5.2 12" stroke="#dc2a2a" stroke-width="2" fill="none"/></svg>
<div class="t" style="left:490px;top:83px;font-size:13px">application.yml</div>
<div class="a" style="left:603px;top:76px;width:158px;height:27px;background:#fff;border:1px solid #b9c3cf;border-bottom:none;border-radius:6px 6px 0 0"></div>
<svg style="left:610px;top:83px" width="11" height="14" viewBox="0 0 11 14"><path d="M0.5 0.5 H7.5 L10.5 3.5 V13.5 H0.5Z" fill="#eef4fb" stroke="#a0822e" stroke-width="1"/><path d="M7.3 0.8 V3.7 H10.2Z" fill="#dcb460"/><path d="M6.6 3.2 V8 Q6.6 10.4 4.2 10.4 Q3.4 10.4 2.8 9.9" stroke="#2a64a4" stroke-width="1.9" fill="none"/></svg>
<div class="t" style="left:626px;top:83px;font-size:13px">TestController.java</div>
<svg style="left:742px;top:85px" width="11" height="11" viewBox="0 0 11 11"><path d="M0.5 0.5 H3.5 L5.5 2.5 L7.5 0.5 H10.5 V3.5 L8.5 5.5 L10.5 7.5 V10.5 H7.5 L5.5 8.5 L3.5 10.5 H0.5 V7.5 L2.5 5.5 L0.5 3.5Z" fill="#fff" stroke="#555" stroke-width="1"/></svg>
<div class="a" style="left:1383px;top:84px;width:10px;height:4px;border:1px solid #5a5a5a;background:#fff"></div>
<div class="a" style="left:1406px;top:84px;width:10px;height:10px;border:1px solid #5a5a5a;background:#fff"><div class="a" style="left:0;top:1px;width:8px;height:1px;background:#5a5a5a"></div></div>
<div class="a" style="left:305px;top:104px;width:12px;height:749px;background-color:#fff;background-image:repeating-conic-gradient(#0a74e0 0% 25%, #ffffff 0% 50%);background-size:2px 2px"></div>
<div class="a" style="left:356px;top:104px;width:1px;height:749px;background:#f2f2f2"></div>
<div class="a" style="left:359px;top:127px;width:1039px;height:22px;background:#e8f2fe"></div>
<div class="a" style="left:539px;top:127px;width:170px;height:22px;background:#d4d4d4"></div>
<div class="a" style="left:318px;top:104px;width:38px;height:749px;overflow:hidden">
<div class="ln" style="left:-1px;top:2.6px">35</div>
<div class="ln" style="left:-1px;top:24.6px">36</div>
<div class="ln" style="left:-1px;top:46.6px">37</div>
<div class="ln" style="left:-1px;top:68.6px">38</div>
<div class="ln" style="left:-1px;top:90.6px">39</div>
<div class="ln" style="left:-1px;top:112.6px">40</div>
<div class="ln" style="left:-1px;top:134.6px">41</div>
<div class="ln" style="left:-1px;top:156.6px">42</div>
<div class="ln" style="left:-1px;top:178.6px">43</div>
<div class="ln" style="left:-1px;top:200.6px">44</div>
<div class="ln" style="left:-1px;top:222.6px">45</div>
<div class="ln" style="left:-1px;top:244.6px">46</div>
<div class="ln" style="left:-1px;top:266.6px">47</div>
<div class="ln" style="left:-1px;top:288.6px">48</div>
<div class="ln" style="left:-1px;top:310.6px">49</div>
<div class="ln" style="left:-1px;top:332.6px">50</div>
<div class="ln" style="left:-1px;top:354.6px">51</div>
<div class="ln" style="left:-1px;top:376.6px">52</div>
<div class="ln" style="left:-1px;top:398.6px">53</div>
<div class="ln" style="left:-1px;top:420.6px">54</div>
<div class="ln" style="left:-1px;top:442.6px">55</div>
<div class="ln" style="left:-1px;top:464.6px">56</div>
<div class="ln" style="left:-1px;top:486.6px">57</div>
<div class="ln" style="left:-1px;top:508.6px">58</div>
<div class="ln" style="left:-1px;top:530.6px">59</div>
<div class="ln" style="left:-1px;top:552.6px">60</div>
<div class="ln" style="left:-1px;top:574.6px">61</div>
<div class="ln" style="left:-1px;top:596.6px">62</div>
<div class="ln" style="left:-1px;top:618.6px">63</div>
<div class="ln" style="left:-1px;top:640.6px">64</div>
<div class="ln" style="left:-1px;top:662.6px">65</div>
<div class="ln" style="left:-1px;top:684.6px">66</div>
<div class="ln" style="left:-1px;top:706.6px">67</div>
<div class="ln" style="left:-1px;top:728.6px">68</div>
</div>
<div id="code" class="a" style="left:359px;top:104px;width:1040px;height:749px;overflow:hidden">
<div class="l" style="top:2.6px">    <span class="an">@ApiOperation</span>(value = <span class="s">&quot;<span class="cj">系</span><span class="cj">统</span><span class="cj">分</span><span class="cj">类</span><span class="cj">明</span><span class="cj">细</span><span class="cj">页</span><span class="cj">面</span>&quot;</span>, httpMethod = <span class="s">&quot;GET&quot;</span>, notes = <span class="s">&quot;<span class="cj">系</span><span class="cj">统</span><span class="cj">分</span><span class="cj">类</span>&quot;</span>)</div>
<div class="l" style="top:24.6px">    <span class="k">public</span> Object gettreeselectdata() <span class="k">throws</span> Exception {</div>
<div class="l" style="top:46.6px">        ArrayNode <span class="v">createArrayNode</span> = JsonUtil.<span class="i">getMapper</span>().createArrayNode();</div>
<div class="l" style="top:68.6px">        ObjectNode <span class="v">createObjectNode</span> = JsonUtil.<span class="i">getMapper</span>().createObjectNode();</div>
<div class="l" style="top:90.6px">        <span class="v">createObjectNode</span>.put(<span class="s">&quot;key&quot;</span>, <span class="s">&quot;shuiguo&quot;</span>);</div>
<div class="l" style="top:112.6px">        <span class="v">createObjectNode</span>.put(<span class="s">&quot;value&quot;</span>, <span class="s">&quot;<span class="cj">水</span><span class="cj">果</span>&quot;</span>);</div>
<div class="l" style="top:134.6px"></div>
<div class="l" style="top:156.6px">        ArrayNode <span class="v">children</span> = JsonUtil.<span class="i">getMapper</span>().createArrayNode();</div>
<div class="l" style="top:178.6px">        ObjectNode <span class="v">childrenNode</span> = JsonUtil.<span class="i">getMapper</span>().createObjectNode();</div>
<div class="l" style="top:200.6px">        <span class="v">childrenNode</span>.put(<span class="s">&quot;key&quot;</span>, <span class="s">&quot;pingguo&quot;</span>);</div>
<div class="l" style="top:222.6px">        <span class="v">childrenNode</span>.put(<span class="s">&quot;value&quot;</span>, <span class="s">&quot;<span class="cj">苹</span><span class="cj">果</span>&quot;</span>);</div>
<div class="l" style="top:244.6px">        <span class="v">children</span>.add(<span class="v">childrenNode</span>);</div>
<div class="l" style="top:266.6px"></div>
<div class="l" style="top:288.6px">        <span class="v">childrenNode</span> = JsonUtil.<span class="i">getMapper</span>().createObjectNode();</div>
<div class="l" style="top:310.6px">        <span class="v">childrenNode</span>.put(<span class="s">&quot;key&quot;</span>, <span class="s">&quot;xinagjiao&quot;</span>);</div>
<div class="l" style="top:332.6px">        <span class="v">childrenNode</span>.put(<span class="s">&quot;value&quot;</span>, <span class="s">&quot;<span class="cj">香</span><span class="cj">蕉</span>&quot;</span>);</div>
<div class="l" style="top:354.6px">        <span class="v">children</span>.add(<span class="v">childrenNode</span>);</div>
<div class="l" style="top:376.6px"></div>
<div class="l" style="top:398.6px">        ObjectNode <span class="v">createObjectNode1</span> = JsonUtil.<span class="i">getMapper</span>().createObjectNode();</div>
<div class="l" style="top:420.6px">        <span class="v">createObjectNode1</span>.put(<span class="s">&quot;key&quot;</span>, <span class="s">&quot;animal&quot;</span>);</div>
<div class="l" style="top:442.6px">        <span class="v">createObjectNode1</span>.put(<span class="s">&quot;value&quot;</span>, <span class="s">&quot;<span class="cj">动</span><span class="cj">物</span>&quot;</span>);</div>
<div class="l" style="top:464.6px"></div>
<div class="l" style="top:486.6px">        ArrayNode <span class="v">children1</span> = JsonUtil.<span class="i">getMapper</span>().createArrayNode();</div>
<div class="l" style="top:508.6px">        ObjectNode <span class="v">childrenNode1</span> = JsonUtil.<span class="i">getMapper</span>().createObjectNode();</div>
<div class="l" style="top:530.6px">        <span class="v">childrenNode1</span>.put(<span class="s">&quot;key&quot;</span>, <span class="s">&quot;dog&quot;</span>);</div>
<div class="l" style="top:552.6px">        <span class="v">childrenNode1</span>.put(<span class="s">&quot;value&quot;</span>, <span class="s">&quot;<span class="cj">狗</span>&quot;</span>);</div>
<div class="l" style="top:574.6px">        <span class="v">children1</span>.add(<span class="v">childrenNode1</span>);</div>
<div class="l" style="top:596.6px"></div>
<div class="l" style="top:618.6px">        <span class="v">childrenNode1</span> = JsonUtil.<span class="i">getMapper</span>().createObjectNode();</div>
<div class="l" style="top:640.6px">        <span class="v">childrenNode1</span>.put(<span class="s">&quot;key&quot;</span>, <span class="s">&quot;cat&quot;</span>);</div>
<div class="l" style="top:662.6px">        <span class="v">childrenNode1</span>.put(<span class="s">&quot;value&quot;</span>, <span class="s">&quot;<span class="cj">猫</span>&quot;</span>);</div>
<div class="l" style="top:684.6px">        <span class="v">children1</span>.add(<span class="v">childrenNode1</span>);</div>
<div class="l" style="top:706.6px"></div>
<div class="l" style="top:728.6px">        ObjectNode <span class="v">createObjectNode2</span> = JsonUtil.<span class="i">getMapper</span>().createObjectNode();</div>
</div>
<div class="a" style="left:659px;top:128px;width:1px;height:20px;background:#000"></div>
<div class="a" style="left:1399px;top:104px;width:16px;height:766px;background:#f0f0f0"></div>
<div class="a" style="left:1415px;top:104px;width:13px;height:766px;background:#f7f7f7"></div>
<div class="a" style="left:1399px;top:238px;width:15px;height:182px;background:#cdcdcd"></div>
<div class="a" style="left:1417px;top:247px;width:9px;height:5px;border:1px solid #c8c8c8;background:#fafafa"></div>
<svg style="left:1403px;top:110px" width="8" height="7"><path d="M0.8 5.8 L4 2.4 L7.2 5.8" stroke="#505050" stroke-width="2.1" fill="none"/></svg>
<svg style="left:1403px;top:842px" width="8" height="7"><path d="M0.8 1.2 L4 4.6 L7.2 1.2" stroke="#505050" stroke-width="2.1" fill="none"/></svg>
<div class="a" style="left:303px;top:853px;width:54px;height:17px;background:#f8f8f8"></div>
<div class="a" style="left:357px;top:854px;width:1042px;height:16px;background:#f0f0f0"></div>
<div class="a" style="left:374px;top:854px;width:856px;height:15px;background:#cdcdcd"></div>
<svg style="left:362px;top:858px" width="7" height="8"><path d="M5.8 0.8 L2.4 4 L5.8 7.2" stroke="#505050" stroke-width="2.1" fill="none"/></svg>
<svg style="left:1387px;top:858px" width="7" height="8"><path d="M1.2 0.8 L4.6 4 L1.2 7.2" stroke="#505050" stroke-width="2.1" fill="none"/></svg>
<div class="a" style="left:380px;top:127px;width:847px;height:728px;border:1px solid #f83232"></div>
<div class="a" style="left:1435px;top:76px;width:20px;height:797px;background:#fff;border:1px solid #d0d6e6;border-radius:6px"></div>
<div class="a" style="left:1436px;top:77px;width:12px;height:26px;background:linear-gradient(#dde6f0,#fff);border-radius:5px 0 0 0"></div>
<div class="a" style="left:1441px;top:83px;width:8px;height:6px;border:1.5px solid #1e62b8;background:linear-gradient(#fff,#8ab8f0)"></div>
<div class="a" style="left:1441px;top:92px;width:8px;height:6px;border:1.5px solid #1e62b8;background:linear-gradient(#fff,#8ab8f0)"></div>
</body></html>
